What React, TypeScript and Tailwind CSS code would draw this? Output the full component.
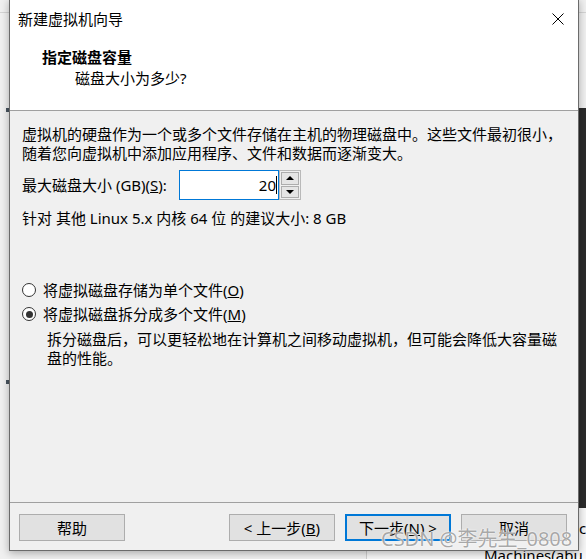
import React from 'react';

function Radio({ checked, children }: { checked?: boolean; children: React.ReactNode }) {
    return (
        <div className="flex h-[20px] items-center pl-[12px]">
            <span className="flex h-[14px] w-[14px] items-center justify-center rounded-full border border-[#333] bg-white">
                {checked && <span className="h-[7px] w-[7px] rounded-full bg-[#333]" />}
            </span>
            <span className="ml-[7px] leading-[20px]">{children}</span>
        </div>
    );
}

function WizardButton({ children, primary }: { children: React.ReactNode; primary?: boolean }) {
    return (
        <button
            type="button"
            className={
                primary
                    ? 'h-[27px] w-[106px] border-2 border-[#0078d7] bg-[#e1e1e1] text-[15px] leading-[20px] text-black'
                    : 'h-[27px] w-[106px] border border-[#adadad] bg-[#e1e1e1] text-[15px] leading-[20px] text-black'
            }
        >
            {children}
        </button>
    );
}

export default function App() {
    return (
        <div className="relative h-[559px] w-[586px] overflow-hidden bg-[#f0f0f0] font-['Noto_Sans','Noto_Sans_CJK_SC',sans-serif] text-[15px] text-black">
            {/* desktop behind the dialog */}
            <div className="absolute left-0 top-[12px] h-px w-full bg-[#d4d4d4]" />
            <div className="absolute left-[579px] top-[108px] h-[400px] w-[7px] bg-[#2b2b2b]" />
            <div className="absolute left-[579px] top-[508px] h-[51px] w-[7px] bg-[#f7f7f7]" />
            <div className="absolute left-[367px] top-[551px] h-[8px] w-[219px] bg-[#f7f7f7]" />
            <div className="absolute left-[366px] top-[551px] h-[8px] w-px bg-[#cfcfcf]" />
            <div className="absolute left-[579px] top-[518px] text-[15px] leading-[20px]">c</div>
            <div className="absolute left-[484px] top-[545px] text-[15px] leading-[20px]">Machines(abu</div>
            <div className="absolute left-[6px] top-[108px] h-[4px] w-[3px] bg-[#4a5560]" />
            <div className="absolute left-[6px] top-[380px] h-[4px] w-[3px] bg-[#4a5560]" />

            {/* wizard window */}
            <div className="absolute left-[9px] top-[-1px] flex h-[552px] w-[570px] flex-col border border-[#6b6b6b] bg-[#f0f0f0] shadow-[0_2px_8px_rgba(0,0,0,0.3)]">
                <div className="h-[111px] border-b border-[#a0a0a0] bg-white">
                    <div className="flex items-center justify-between pl-[8px] pr-[14px] pt-[9px]">
                        <span className="leading-[20px]">新建虚拟机向导</span>
                        <svg width="12" height="12" viewBox="0 0 12 12" className="block">
                            <path d="M0.5 0.5L11.5 11.5M11.5 0.5L0.5 11.5" stroke="#000" strokeWidth="1" />
                        </svg>
                    </div>
                    <div className="pl-[32px] pt-[18px] font-bold leading-[20px]">指定磁盘容量</div>
                    <div className="pl-[65px] pt-[1px] leading-[20px]">磁盘大小为多少?</div>
                </div>

                <div className="flex-1">
                    <p className="pl-[12px] pt-[14px] leading-[19px]">
                        虚拟机的硬盘作为一个或多个文件存储在主机的物理磁盘中。这些文件最初很小，
                        <br />
                        随着您向虚拟机中添加应用程序、文件和数据而逐渐变大。
                    </p>

                    <div className="mt-[7px] flex h-[30px] items-center pl-[12px]">
                        <span className="w-[157px] leading-[20px]">
                            最大磁盘大小 (GB)(<u>S</u>):
                        </span>
                        <div className="flex h-[30px] w-[100px] items-center justify-end border border-[#0078d7] bg-white pr-[1px]">
                            <span className="leading-[20px]">20</span>
                            <span className="h-[18px] w-px bg-black" />
                        </div>
                        <div className="flex h-[30px] w-[22px] flex-col border border-[#b9b9b9] bg-[#f0f0f0] p-px">
                            <div className="flex flex-1 items-center justify-center border border-[#adadad] bg-[#e5e5e5]">
                                <svg width="8" height="4" viewBox="0 0 8 4">
                                    <path d="M0 4L4 0L8 4Z" fill="#000" />
                                </svg>
                            </div>
                            <div className="mt-px flex flex-1 items-center justify-center border border-[#adadad] bg-[#e5e5e5]">
                                <svg width="8" height="4" viewBox="0 0 8 4">
                                    <path d="M0 0L8 0L4 4Z" fill="#000" />
                                </svg>
                            </div>
                        </div>
                    </div>

                    <p className="mt-[8px] pl-[12px] leading-[20px]">针对 其他 Linux 5.x 内核 64 位 的建议大小: 8 GB</p>

                    <div className="mt-[52px]">
                        <Radio>
                            将虚拟磁盘存储为单个文件(<u>O</u>)
                        </Radio>
                    </div>
                    <div className="mt-[4px]">
                        <Radio checked>
                            将虚拟磁盘拆分成多个文件(<u>M</u>)
                        </Radio>
                    </div>
                    <p className="mt-[6px] pl-[37px] leading-[19px]">
                        拆分磁盘后，可以更轻松地在计算机之间移动虚拟机，但可能会降低大容量磁
                        <br />
                        盘的性能。
                    </p>
                </div>

                <div className="flex h-[48px] items-start justify-between border-t border-[#a0a0a0] pl-[9px] pr-[11px] pt-[11px]">
                    <WizardButton>帮助</WizardButton>
                    <div className="flex gap-[10px]">
                        <WizardButton>
                            &lt; 上一步(<u>B</u>)
                        </WizardButton>
                        <WizardButton primary>
                            下一步(<u>N</u>) &gt;
                        </WizardButton>
                        <WizardButton>取消</WizardButton>
                    </div>
                </div>
            </div>

            {/* watermark */}
            <div className="absolute left-[381px] top-[526px] text-[20px] leading-[26px] text-[rgba(140,140,140,0.75)] [text-shadow:0_0_2px_#fff,0_0_1px_#fff]">
                CSDN @李先生_0808
            </div>
        </div>
    );
}
